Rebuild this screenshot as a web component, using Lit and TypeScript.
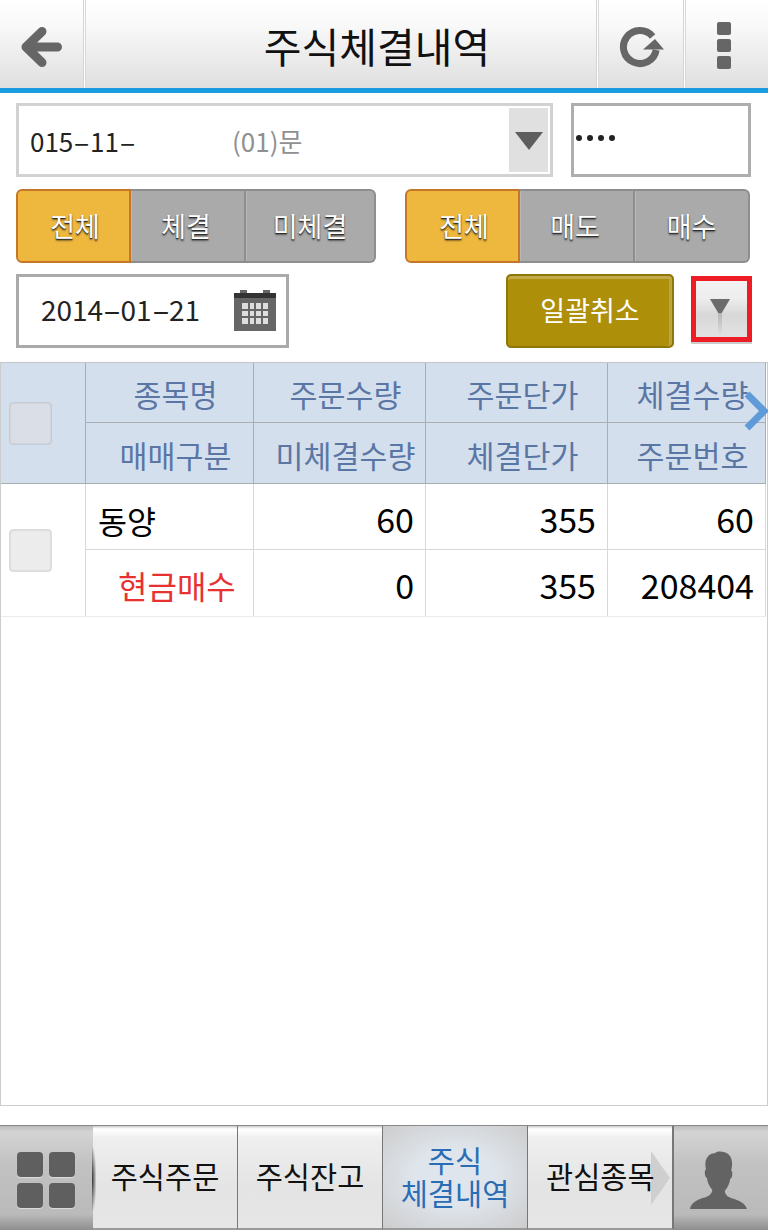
import { LitElement, html, css, svg } from "lit";
import { customElement } from "lit/decorators.js";

const back = svg`<svg width="46" height="46" viewBox="0 0 46 46"><path d="M7 23 23 7.500M7 23 23 38.500M8 23H38.500" fill="none" stroke="#666" stroke-width="9" stroke-linecap="round" stroke-linejoin="round"/></svg>`;
const reload = svg`<svg width="46" height="44" viewBox="0 0 46 44"><path d="M34.600 11.400A16.500 16.500 0 1 0 38.200 25" fill="none" stroke="#666" stroke-width="7"/><path d="M37 14 25 24.500H46z" fill="#666"/></svg>`;
const calendar = svg`<svg width="42" height="42" viewBox="0 0 42 42"><path d="M6 0h7v4h16V0h7v4h6v37H0V4h6z" fill="#666"/><rect y="3" width="42" height="5" fill="#333"/><rect x="8" y="13" width="26" height="21" fill="#ddd"/><g fill="#666"><rect x="14" y="13" width="2" height="21"/><rect x="20" y="13" width="2" height="21"/><rect x="27" y="13" width="2" height="21"/><rect x="8" y="19" width="26" height="2"/><rect x="8" y="26" width="26" height="2"/></g></svg>`;
const person = svg`<svg width="62" height="60" viewBox="0 7 64 56" preserveAspectRatio="none"><path d="M1 63c1-6 8-9 16-11 5-1.500 7-4 7-7-3-3-5-7-5.500-11-2-1-2.500-4-2-7l1-1c-1-4-1-9 2-12 2-2 4-3 7-3 2-2 7-2 10-1 5 1 8 5 8 11 0 2-.5 4-1 6l1 1c.5 3 0 6-2 7-.5 4-2.500 8-5.500 11 0 3 2 5.500 7 7 8 2 15 5 16 11z" fill="#636363"/></svg>`;

@customElement("app-root")
export class AppRoot extends LitElement {
  static styles = css`
    :host { display: block; width: 768px; height: 1230px; background: #fff; overflow: hidden; position: relative;
      font-family: "Noto Sans CJK KR", "Noto Sans", sans-serif; color: #000; }
    * { box-sizing: border-box; }
    .page { display: flex; flex-direction: column; height: 1230px; }

    .head { height: 93px; flex: none; display: grid; grid-template-columns: 83px 3px 1fr 3px 84px 3px 82px; border-bottom: 5px solid #1a9ce0;
      background: linear-gradient(#fff 0, #fafafa 22px, #dfdfdf 100%); }
    .head .div { background: linear-gradient(90deg, #d4d4d4 33%, #fff 33%, #fff 66%, #d8d8d8 66%); }
    .head .ic { display: flex; align-items: center; justify-content: center; padding-top: 6px; }
    .head .ic.back { padding-left: 1px; }
    .head .ic.more { padding: 2px 6px 0 0; }
    .title { display: flex; align-items: center; justify-content: center; font-size: 41px; color: #111; padding-left: 72px; padding-top: 1px; }
    .dots { display: flex; flex-direction: column; gap: 4px; }
    .dots i { display: block; width: 14px; height: 13px; border-radius: 2px; background: #666; }
    .m { display: inline-block; transform: scaleX(1.9); margin: 0 3.850px; }

    .form { flex: none; display: flex; flex-direction: column; padding: 10px 16px 0 16px; height: 269px; }
    .r1 { display: flex; height: 74px; }
    .sel { width: 537px; border: 3px solid #d2d2d2; display: flex; align-items: center; font-size: 26px; padding: 2px 2px 2px 11px; }
    .sel .no { width: 202px; color: #222; }
    .sel .nm { color: #909090; flex: 1; }
    .sel .dd { width: 39px; height: 64px; background: #e0e0e0; display: flex; align-items: center; justify-content: center; padding-top: 2px; }
    .pw { width: 180px; margin-left: 18px; border: 3px solid #aeaeae; display: flex; align-items: center; padding: 0 0 4px 2px; gap: 5px; }
    .pw i { display: block; width: 6px; height: 6px; border-radius: 50%; background: #222; }

    .r2 { display: flex; margin-top: 12px; height: 74px; justify-content: space-between; width: 734px; }
    .seg { display: flex; height: 74px; }
    .seg.a { width: 360px; }
    .seg.b { width: 345px; }
    .seg span { display: flex; align-items: center; justify-content: center; font-size: 27px; color: #fff; background: #aaa;
      border: 2px solid #8e8e8e; border-left: 0; box-shadow: inset 1px 0 0 #b8b8b8;
      text-shadow: 0 1px 1px #222, 0 2px 2px rgba(0,0,0,.45); padding-bottom: 1px; }
    .seg span.on { width: 115px; background: #eeb73e; border: 2px solid #c5762b; border-radius: 6px 0 0 6px; padding-left: 3px; box-shadow: none; }
    .seg span.mid { width: 115px; padding-right: 3px; }
    .seg span.end { flex: 1; border-radius: 0 6px 6px 0; }

    .r3 { display: flex; margin-top: 11px; height: 74px; }
    .date { width: 273px; height: 74px; border: 3px solid #aaa; display: flex; align-items: center; font-size: 28px; color: #222; padding: 0 10px 5px 22px; justify-content: space-between; }
    .date svg { flex: none; margin-top: 5px; }
    .gold { margin-left: 217px; width: 168px; height: 74px; border-radius: 5px; border: 2px solid #8e7608; background: #ad8f09; color: #fff; font-size: 27px;
      display: flex; align-items: center; justify-content: center; box-shadow: inset 0 3px 0 #c2ab4c, inset -3px 0 0 #bda344; padding-bottom: 3px; }
    .redwrap { margin: 2px 0 0 17px; width: 61px; height: 68px; border-bottom: 2px solid #ccc; }
    .red { width: 61px; height: 66px; border: 5px solid #ee1c25; background: linear-gradient(#f2f2f2 0, #eee 30%, #d8d8d8 60%, #e2e2e2 100%); position: relative; display: flex; justify-content: center; padding: 18px 3px 0 0; }
    .red b { position: absolute; left: 22px; top: 32px; width: 4px; height: 22px; background: linear-gradient(#b8b8b8, rgba(200,200,200,0)); }

    .tbl { flex: 1; margin: 0 0 19px 0; border: 1px solid #ccc; border-top: 1px solid #c4c4c4; position: relative; display: flex; flex-direction: column; height: 744px; }
    .grid { display: grid; grid-template-columns: 85px 168px 172px 182px 158px; width: 765px; margin-right: -1px; }
    .hgrid { background: #d4dfed; border-bottom: 1px solid #a9aeb5; grid-template-rows: 60px 60px; }
    .hgrid .c { border-right: 1px solid #a9aeb5; color: #5a76a4; font-size: 30.400px; display: flex; align-items: center; justify-content: center; padding: 3px 0 0 12px; white-space: nowrap; }
    .hgrid .t { border-bottom: 1px solid #a9aeb5; }
    .ck { grid-row: span 2; display: flex; align-items: center; padding-left: 8px; border-right: 1px solid #a9aeb5; }
    .box { width: 43px; height: 43px; border-radius: 4px; background: #d9dee7; border: 1px solid #c6ccd5; box-shadow: inset 0 0 2px #bbb; }
    .dgrid { grid-template-rows: 66px 66px; border-bottom: 1px solid #ebebeb; }
    .dgrid .ck { border-right: 1px solid #d8d8d8; }
    .dgrid .box { background: #ececec; border-color: #dcdcdc; }
    .dgrid .c { border-right: 1px solid #d8d8d8; font-size: 34px; display: flex; align-items: center; justify-content: flex-end; padding: 3px 11px 0 0; color: #000; white-space: nowrap; }
    .dgrid .t { border-bottom: 1px solid #d8d8d8; }
    .dgrid .c.nm { justify-content: flex-start; padding: 6px 0 0 12px; font-size: 31.500px; }
    .dgrid .c.sell { justify-content: flex-start; padding: 3px 0 0 32px; font-size: 32px; color: #e83232; }
    .chev { position: absolute; right: -2px; top: 28px; }

    .nav { flex: none; height: 105px; display: grid; grid-template-columns: 93px 145px 145px 145px 146px 94px; border-top: 1px solid #888; position: relative; }
    .nav .t { border-right: 1px solid #777; border-bottom: 2px solid #9a9a9a; background: linear-gradient(#ccc 0, #fff 3px, #efefef 12px, #e4e4e4 60%, #e6e6e6 100%); display: flex; align-items: center; justify-content: center; font-size: 29.500px; color: #111; line-height: 33px; text-align: center; padding-bottom: 3px; position: relative; }
    .nav .t.cur { background: radial-gradient(ellipse at 50% 50%, #dfe5ec 40%, #cccccc 100%); color: #2a6db5; }
    .nav .t.arrow { justify-content: flex-start; padding-left: 18px; border-right: 2px solid #777; }
    .nav .t.arrow::after { content: ""; position: absolute; left: 123px; top: 25px; border-left: 19px solid #cfcfcf; border-top: 27px solid transparent; border-bottom: 27px solid transparent; }
    .nav .t.arrow span { position: relative; z-index: 1; }
    .side { background: linear-gradient(#bbb 0, #d4d4d4 6px, #c2c2c2 35%, #bababa 85%, #8e8e8e 100%); display: flex; align-items: center; justify-content: center; }
    .side.l { position: relative; padding: 3px 1px 0 0; }
    .side.l::after { content: ""; position: absolute; right: -3px; top: 22px; width: 4px; height: 62px; background: radial-gradient(ellipse at 0 50%, #333, rgba(0,0,0,0) 80%); z-index: 2; }
    .side.r { padding: 1px 2px 0 0; }
    .g4 { display: grid; grid-template-columns: 26px 26px; grid-auto-rows: 25px; gap: 6px; }
    .g4 i { display: block; background: #5f5f5f; border-radius: 4px; box-shadow: 0 1px 1px #ddd; }
  `;

  render() {
    const m = html`<span class="m">-</span>`;
    return html`<div class="page">
      <div class="head">
        <div class="ic back">${back}</div><div class="div"></div>
        <div class="title">주식체결내역</div><div class="div"></div>
        <div class="ic">${reload}</div><div class="div"></div>
        <div class="ic more"><div class="dots"><i></i><i></i><i></i></div></div>
      </div>
      <div class="form">
        <div class="r1">
          <div class="sel"><span class="no">015${m}11${m}</span><span class="nm">(01)문</span>
            <div class="dd"><svg width="30" height="20" viewBox="0 0 30 20"><path d="M1 1h28L15 19z" fill="#5e5e5e"/></svg></div></div>
          <div class="pw"><i></i><i></i><i></i><i></i></div>
        </div>
        <div class="r2">
          <div class="seg a"><span class="on">전체</span><span class="mid">체결</span><span class="end">미체결</span></div>
          <div class="seg b"><span class="on">전체</span><span class="mid">매도</span><span class="end">매수</span></div>
        </div>
        <div class="r3">
          <div class="date"><span>2014${m}01${m}21</span>${calendar}</div>
          <div class="gold">일괄취소</div>
          <div class="redwrap"><div class="red"><svg width="22" height="18" viewBox="0 0 22 18"><path d="M1 0h20L11 17z" fill="#6c6c6c"/></svg><b></b></div></div>
        </div>
      </div>
      <div class="tbl">
        <div class="grid hgrid">
          <div class="ck"><div class="box"></div></div>
          <div class="c t">종목명</div><div class="c t">주문수량</div><div class="c t">주문단가</div><div class="c t">체결수량</div>
          <div class="c">매매구분</div><div class="c">미체결수량</div><div class="c">체결단가</div><div class="c">주문번호</div>
        </div>
        <div class="grid dgrid">
          <div class="ck"><div class="box"></div></div>
          <div class="c t nm">동양</div><div class="c t">60</div><div class="c t">355</div><div class="c t">60</div>
          <div class="c sell">현금매수</div><div class="c">0</div><div class="c">355</div><div class="c">208404</div>
        </div>
        <svg class="chev" width="26" height="44" viewBox="0 0 26 44"><path d="M4 3 21 20 4 37" fill="none" stroke="#5f9bd8" stroke-width="7"/></svg>
      </div>
      <div class="nav">
        <div class="side l"><div class="g4"><i></i><i></i><i></i><i></i></div></div>
        <div class="t">주식주문</div>
        <div class="t">주식잔고</div>
        <div class="t cur">주식<br />체결내역</div>
        <div class="t arrow"><span>관심종목</span></div>
        <div class="side r">${person}</div>
      </div>
    </div>`;
  }
}
